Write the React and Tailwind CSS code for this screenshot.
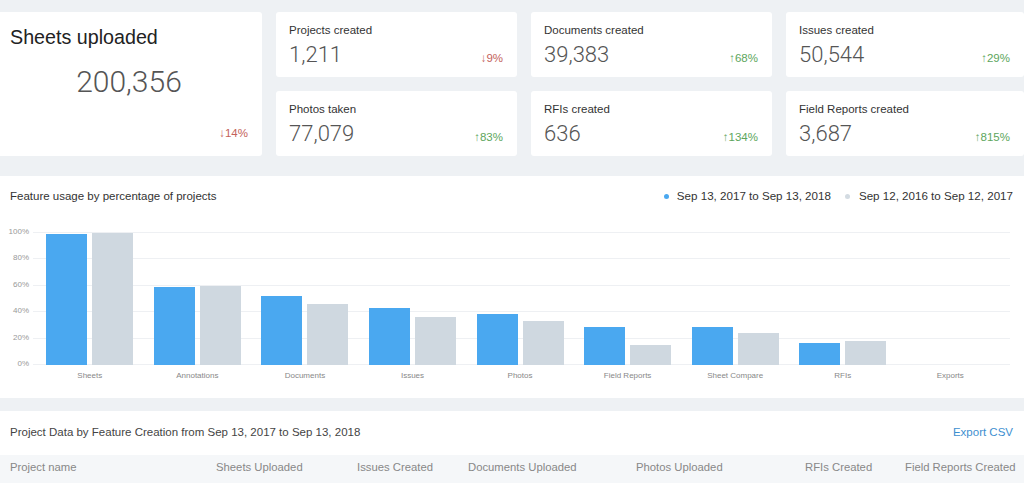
import React from "react";

const font = { fontFamily: '"Liberation Sans", Arial, sans-serif' };
const numFont = { fontFamily: 'Roboto, "Liberation Sans", sans-serif', fontWeight: 300 };

const small = [
  { label: "Projects created", value: "1,211", change: "↓9%", up: false },
  { label: "Documents created", value: "39,383", change: "↑68%", up: true },
  { label: "Issues created", value: "50,544", change: "↑29%", up: true },
  { label: "Photos taken", value: "77,079", change: "↑83%", up: true },
  { label: "RFIs created", value: "636", change: "↑134%", up: true },
  { label: "Field Reports created", value: "3,687", change: "↑815%", up: true },
];

const bars = [
  { name: "Sheets", a: 99.2, b: 100 },
  { name: "Annotations", a: 58.9, b: 59.9 },
  { name: "Documents", a: 52, b: 46.4 },
  { name: "Issues", a: 43.4, b: 36.5 },
  { name: "Photos", a: 38.4, b: 33.3 },
  { name: "Field Reports", a: 28.5, b: 15.2 },
  { name: "Sheet Compare", a: 28.5, b: 24.1 },
  { name: "RFIs", a: 17, b: 18.3 },
  { name: "Exports", a: 0, b: 0 },
];

const ticks = [100, 80, 60, 40, 20, 0];

const cols = [
  "Project name",
  "Sheets Uploaded",
  "Issues Created",
  "Documents Uploaded",
  "Photos Uploaded",
  "RFIs Created",
  "Field Reports Created",
];

function SmallCard({ label, value, change, up }) {
  return (
    <div className="bg-white rounded-[3px] pt-[11px] pl-[13px] pr-[14px] flex flex-col">
      <div className="text-[11.5px] leading-[14px] text-[#333]">{label}</div>
      <div className="mt-[5px] flex items-baseline justify-between">
        <span className="text-[22px] leading-[26px] text-[#555]" style={numFont}>{value}</span>
        <span className={`text-[11.5px] leading-[14px] ${up ? "text-[#5da65d]" : "text-[#c4625b]"}`}>{change}</span>
      </div>
    </div>
  );
}

export default function App() {
  return (
    <div className="w-[1024px] h-[483px] bg-[#eef1f4] overflow-hidden pt-[12px]" style={font}>
      <div className="flex gap-[14px] h-[144px]">
        <div className="w-[262px] shrink-0 bg-white rounded-r-[3px] flex flex-col pt-[12px] pl-[10px] pr-[14px]">
          <div className="text-[19.7px] leading-[26px] text-[#222]">Sheets uploaded</div>
          <div className="mt-[15px] text-center text-[30px] leading-[34px] text-[#555]" style={numFont}>200,356</div>
          <div className="mt-[27px] text-right text-[11.5px] leading-[14px] text-[#c4625b]">↓14%</div>
        </div>
        <div className="flex-1 grid grid-cols-[241px_241px_1fr] grid-rows-2 gap-[14px]">
          {small.map((c) => (
            <SmallCard key={c.label} {...c} />
          ))}
        </div>
      </div>

      <div className="mt-[20px] h-[222px] bg-white flex flex-col">
        <div className="pt-[13px] pl-[10px] pr-[11px] flex items-center justify-between">
          <div className="text-[11.5px] leading-[14px] text-[#333]">Feature usage by percentage of projects</div>
          <div className="flex items-center text-[11.6px] leading-[14px] text-[#333]">
            <span className="w-[5px] h-[5px] rounded-full bg-[#4aa8f0] mr-[8px]"></span>
            <span>Sep 13, 2017 to Sep 13, 2018</span>
            <span className="w-[5px] h-[5px] rounded-full bg-[#d3dbe2] ml-[14px] mr-[9px]"></span>
            <span>Sep 12, 2016 to Sep 12, 2017</span>
          </div>
        </div>
        <div className="mt-[30px] relative h-[132px] ml-[33px] w-[977px]">
          {ticks.map((t) => (
            <div key={t} className="absolute left-0 right-0 h-px bg-[#eef0f3]" style={{ bottom: `${t}%` }}>
              <span className="absolute right-[981px] -top-[5px] text-[8px] leading-[10px] text-[#999] whitespace-nowrap">{t}%</span>
            </div>
          ))}
          <div className="absolute inset-0 left-[3px] w-[968px] flex">
            {bars.map((b) => (
              <div key={b.name} className="flex-1 flex items-end justify-center gap-[5px]">
                <div className="w-[41px] bg-[#4aa8f0]" style={{ height: `${b.a}%` }}></div>
                <div className="w-[41px] bg-[#cfd8e0]" style={{ height: `${b.b}%` }}></div>
              </div>
            ))}
          </div>
        </div>
        <div className="mt-[6px] ml-[36px] w-[968px] flex">
          {bars.map((b) => (
            <div key={b.name} className="flex-1 text-center text-[8px] leading-[10px] text-[#888]">{b.name}</div>
          ))}
        </div>
      </div>

      <div className="mt-[13px] bg-white">
        <div className="h-[44px] pl-[10px] pr-[11px] flex items-center justify-between">
          <div className="text-[11.5px] text-[#444]">Project Data by Feature Creation from Sep 13, 2017 to Sep 13, 2018</div>
          <div className="text-[11.5px] text-[#3d8fd0]">Export CSV</div>
        </div>
        <div className="h-[40px] bg-[#f5f7f9] pl-[10px] pt-[5px] grid grid-cols-[206px_141px_111px_168px_169px_100px_1fr] text-[11.3px] leading-[14px] text-[#888]">
          {cols.map((c) => (
            <div key={c} className="whitespace-nowrap">{c}</div>
          ))}
        </div>
      </div>
    </div>
  );
}
